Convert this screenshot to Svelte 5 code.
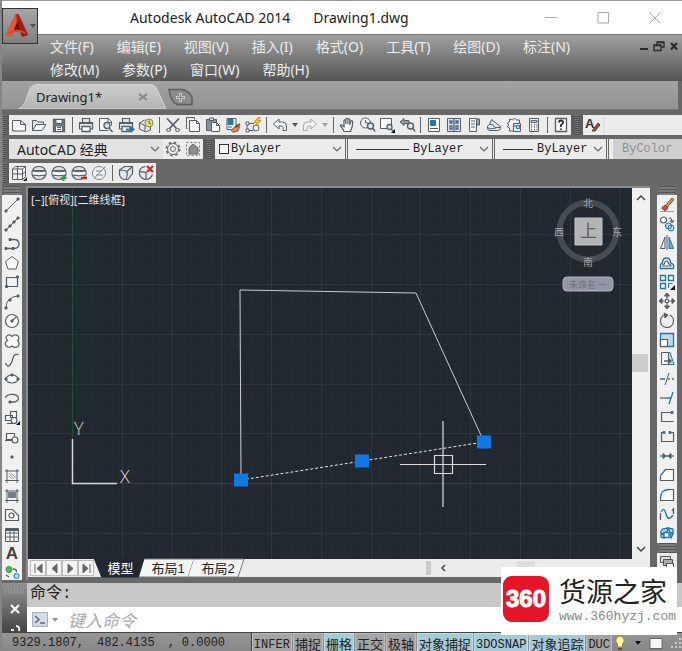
<script>
  const D = '#575d65';
  const B = '#2478a8';
  const L = '#b8dced';
  const G = '#2f9e3f';
  const R = '#cc2a2a';

  // Each icon is a list of [path, stroke, fill, stroke width] on a 20 by 20 grid.
  const globe = [['M3.500 7.500q1.500-4 6.500-4t6.500 4zM3.500 12.500q1.500 4 6.500 4t6.500-4z', D, '#dcdfe2', 1.2], ['M3 8q7 1.500 14 0v4q-7 1.500-14 0z', D, '#f7f7f7']];
  const glass = ['M10.500 11a3 3 0 1 1 6 0a3 3 0 1 1-6 0M15.700 13l2.300 3.500', D, '#d7e8f3', 1.4];
  const printer = [['M6.500 8V3.500h7V8M3.500 7.500h13v6.500h-13z', D, '#e3e6e8', 1.2], ['M6 11.500h8v5H6z', D, '#fff', 1.3], ['M4 8.500h12', D]];
  const box3 = [['M3.500 7l5-3.500h8v7l-4.500 6H8q-4-1.500-4.500-5zM3.500 7q5 0 7.500 1.500q1 4-1 8M11 8.500l5.500-5', D, '#e3e8ec', 1.2]];

  const standard = [
    { n: 'New', p: [['M3.500 5.500h8l5 4v6.500h-13zM11.500 5.500v4h5', D, '#f9f9f9']] },
    { n: 'Open', p: [['M3.500 15.500v-10h4l1.500 1.500h5.500v2.500', D, '#dfe4e7'], ['M3.500 15.500l3.500-6h10l-4 6z', D, '#f4f4f4']] },
    { n: 'Save', p: [['M4.500 4.500h11v12h-11z', D, '#747b84', 1.3], ['M7 4.500h6v4H7zM6.500 11h7v5.500h-7z', D, '#fff'], ['M8 12.500h4M8 14.500h4', D]] },
    { sep: true },
    { n: 'Plot', p: printer },
    { n: 'Plot preview', p: [['M12.500 15.500h-9v-12h9l3 3v4M12 3.500v4h4', D, '#f6f6f6'], ['M8 10.500a3 3 0 1 1 6 0a3 3 0 1 1-6 0M13 13l3.500 4', D, '#d7e8f3', 1.4]] },
    { n: 'Publish', p: [...printer, ['M10 14.500h7M14.500 12l3 2.500l-3 2.500', B, 'none', 2]] },
    { n: '3D print', p: [['M3.500 8l5-3l6 3v7l-5 2l-6-3zM3.500 8l5.500 2.500v6', D, '#e7e7e2'], ['M9 8a4 4 0 1 1 8 0a4 4 0 1 1-8 0', '#8a8a3b', '#e3dd80'], ['M13 5.500V8l2 1', D]] },
    { sep: true },
    { n: 'Cut', p: [['M4 3.500l9.500 10M16 3.500L6.500 13.500', D, 'none', 1.7], ['M3.500 15a2 1.500 0 1 1 4 0a2 1.500 0 1 1-4 0M12.500 15a2 1.500 0 1 1 4 0a2 1.500 0 1 1-4 0', D]] },
    { n: 'Copy', p: [['M4.500 13.500h-1v-11h8v2', D], ['M6.500 5.500h7l3 3v8h-10zM13.500 5.500v3h3', D, '#fafafa']] },
    { n: 'Paste', p: [['M3.500 4.500h10v11h-10z', D, '#8a9097'], ['M6.500 3h4v2.500h-4z', D, '#ddd'], ['M8.500 7.500h5l3 3v6h-8zM13.500 7.500v3h3', D, '#fff']] },
    { n: 'Match properties', p: [['M4 3.500h9v11H4z', D, '#f7f9fb'], ['M5 4.500h5v5H5z', B, B], ['M5 12h4', D], ['M8 15l4-3l5-1l-2 5l-5 1.500z', '#a45d2e', '#d18b57'], ['M12 12l5-3', '#684024', 'none', 1.5]] },
    { n: 'Block editor', p: [['M4 15.500V8.500h7M4 15.500h6', D], ['M3 14h3v3H3zM3 7h3v3H3z', D, '#fff'], ['M10 13a3 3 0 1 1 6 0a3 3 0 1 1-6 0', D, '#e7edf1'], ['M15 2.500l-4 5h3l-1 3l5-5h-3l2-3z', '#d6980f', '#ffc52c']] },
    { sep: true },
    { n: 'Undo', p: [['M3.500 9l5.500-5v3h3.500q4 0 4 4v4.500h-3.500v-3q0-1.500-2-1.500H9v3z', D, '#f4f4f4']] },
    { drop: true, n: 'Undo list' },
    { n: 'Redo', p: [['M16.500 9l-5.500-5v3H7.500q-4 0-4 4v4.500H7v-3q0-1.500 2-1.500h2v3z', '#a5a8ab', '#f4f4f4']] },
    { drop: true, n: 'Redo list', pale: true },
    { sep: true },
    { n: 'Pan', p: [['M7 16.500q-1-3-3.500-5.500q-.5-1.500 1-1.200l2.500 2V5.500q.8-1.500 1.800 0V9V4q1-1.500 2 0v5V4.500q1-1.200 2 0V10l1.200-4q1.500-.8 1.800.5q0 5-2.300 10z', D, '#fbfbfb', 1.2]] },
    { n: 'Zoom realtime', p: [['M3.500 8a5 5 0 1 1 10 0a5 5 0 1 1-10 0M8.500 5v3h3', D, '#f2f2f2'], glass] },
    { n: 'Zoom window', p: [['M3.500 3.500h11v10h-11z', D, '#fafafa'], ['M10 12a2.500 2.500 0 1 1 5 0a2.500 2.500 0 1 1-5 0M14 14l2 2', D, '#dce9ef', 1.3], ['M18 14v4h-4z', 'none', '#111']] },
    { n: 'Zoom previous', p: [['M3 7l4-3.500v2h5v3H7v2z', D, '#9199a1'], glass] },
    { sep: true },
    { n: 'Properties', p: [['M4.500 3.500h11v13h-11z', D, '#fafafa'], ['M6.500 5.500h5v5h-5z', B, B], ['M6 13.500h8', D]] },
    { n: 'DesignCenter', p: [['M3.500 3.500h13v13h-13z', D, '#dce4ee'], ['M6 6h2v2H6zM12 6h2v2h-2zM6 11h2v3H6zM12 11h2v3h-2zM10 4v12', '#4c5e8e', '#fff', 1.3]] },
    { n: 'Tool palettes', p: [['M5.500 3.500h7v13h-7z', D, '#fafafa'], ['M12.500 4h3v6h-3z', D, '#9da3a8'], ['M7 6h4M7 9h4M7 12h4', D, 'none', 1]] },
    { n: 'Sheet set', p: [['M3.500 13.500q-1-3 2-4l2-5l9 7v2q-.5 2-3 2H6q-2 0-2.500-2z', D, '#e2e6e9'], ['M6 9.500q3-1 5 3h5.500M4 13q3 1.500 8 0', D]] },
    { n: 'Markup', p: [['M3.500 12l1-2l-1-2l2-1v-3l3 1l2-2l2 2h3v3', D, '#f5f5f5'], ['M3.500 12l2 1v3h4', D], ['M9.500 8.500h7v8h-7zM9.500 11h7', D, '#e5edf3'], ['M12.500 10.500h3v3h-3z', B, L]] },
    { n: 'QuickCalc', p: [['M5.500 3.500h9v13h-9z', D, '#f5f5f5'], ['M7 5.500h6v2H7z', D, '#d6dde0'], ['M7 10h1M10 10h1M12.500 10h1M7 12h1M10 12h1M12.500 12h1M7 14.500h1M10 14.500h1M12.500 14.500h1', D, 'none', 1.3]] },
    { sep: true },
    { n: 'Help', p: [['M4.500 3.500h11v13h-11z', D, '#fafafa', 1.3], ['M8 7.500q0-2 2-2t2 2q0 1.500-2 2.500v2M10 13.500v1.500', '#26292d', 'none', 1.8]] }
  ];

  const visual = [
    { n: '2D wireframe', p: [['M3.500 6l3-2.500h10v10l-3 3h-10zM3.500 6h10v10.500M13.500 6l3-2.500M8.500 4v12.500M3.500 11h10l3-2.500', D, '#f5f5f5'], ['M18 14v4h-4z', 'none', '#111']] },
    { n: 'Hidden', p: globe },
    { n: 'Add view', p: [...globe, ['M14.500 12v6M11.500 15h6', G, 'none', 2]] },
    { n: 'Remove view', p: [...globe, ['M12 15h6', R, 'none', 2.4]] },
    { n: 'Conceptual', p: [['M3.500 10a6.500 6.500 0 1 1 13 0a6.500 6.500 0 1 1-13 0M5 15.500L16.500 3.500M7 8h6M7 12h7', '#82888e', '#f0f1f2']] },
    { sep: true },
    { n: 'View cube', p: box3 },
    { n: 'Close view', p: [['M3.500 8q1-4 6-4.500M3.500 8v3.500q2 5 6.500 5t6.500-5M10 9v7.500M3.500 8q3 1.500 6.500 1', D, '#e3e8ec', 1.2], ['M11 3l6 6M17 3l-6 6', R, 'none', 2.2]] }
  ];

  const draw = [
    { n: 'Line', p: [['M4 16L16 4', D], ['M3 15h2v2H3zM15 3h2v2h-2z', D, D]] },
    { n: 'Construction line', p: [['M4 16L16 4', D], ['M3 15h2v2H3zM15 3h2v2h-2zM7 11h2v2H7zM11 7h2v2h-2z', D, D]] },
    { n: 'Polyline', p: [['M4 14.500h8M8 5.500h4q5 0 5 4.500t-5 4.500', D, 'none', 1.3], ['M3 13.500h2v2H3zM7 4.500h2v2H7zM10 13.500h2v2h-2z', D, D]] },
    { n: 'Polygon', p: [['M10 3.500l6.500 5l-2.500 7.500H6L3.500 8.500z', D, '#f8f8f8']] },
    { n: 'Rectangle', p: [['M4.500 5.500h11v9h-11z', D, 'none', 1.2], ['M14.500 4h2v2h-2zM3.500 13.500h2v2h-2z', D, D]] },
    { n: 'Arc', p: [['M4 16Q4 5 16 4', D], ['M3 15h2v2H3zM7 7h2v2H7zM15 3h2v2h-2z', D, D]] },
    { n: 'Circle', p: [['M3.500 10a6.500 6.500 0 1 1 13 0a6.500 6.500 0 1 1-13 0M10 10l4-4', D, '#fafafa', 1.2], ['M9 9h2v2H9z', D, D]] },
    { n: 'Revision cloud', p: [['M5.500 9.500q-3-3 0-5q3-1.500 4.500 1q3-3 6-.5q2 3-.5 4.500q3 3 .5 6q-3.500 2-6-.5q-3 2.500-6 0q-2-3 1.500-5.500z', D, '#fafafa', 1.2]] },
    { n: 'Spline', p: [['M3.500 13q2 5 4.500 2t3-7t5.500-3.500', D, 'none', 1.3]] },
    { n: 'Ellipse', p: [['M4 10a6 4 0 1 1 12 0a6 4 0 1 1-12 0', D, '#fafafa', 1.2], ['M3 9h2v2H3zM15 9h2v2h-2zM9 5h2v2H9z', D, D]] },
    { n: 'Ellipse arc', p: [['M3.500 9a6.500 4 0 1 1 9 4H8', D, 'none', 1.3], ['M7 12h2v2H7z', D, D]] },
    { n: 'Insert block', p: [['M8.500 3.500h6v6h-6zM3.500 7.500h7v5h-7z', D, '#fafafa', 1.2], ['M9 12.500a3 3 0 1 1 6 0a3 3 0 1 1-6 0M5 15.500h8', D, '#f3f3f3', 1.2], ['M18 13v4h-4z', 'none', '#111']] },
    { n: 'Make block', p: [['M4.500 5.500h8v6h-8zM3 12.500h8', D, '#fafafa', 1.2], ['M10 12a3 3 0 1 1 6 0a3 3 0 1 1-6 0', D, '#fafafa', 1.2]] },
    { n: 'Point', p: [['M9 9h2v2H9z', D, D]] },
    { n: 'Hatch', p: [['M5 3v14M3 5h14M3 14.500h14M15 3v14', D], ['M7 7l5 6M9 7l5 5M7 10l3 3', '#a6abaf']] },
    { n: 'Gradient', p: [['M5 3v14M3 5h14M3 14.500h14M15 3v14', D], ['M6.500 6.500h7v5h-7z', '#777e85', '#777e85']] },
    { n: 'Region', p: [['M3.500 4.500h7l6 6v5h-13z', D, '#f7f7f7', 1.2], ['M7 10.500a2.500 2.500 0 1 1 5 0a2.500 2.500 0 1 1-5 0', D, '#fff', 1.2]] },
    { n: 'Table', p: [['M3.500 3.500h13v13h-13zM3.500 8h13M3.500 12h13M8 6v10.500M12 6v10.500', D, '#fafafa'], ['M4 4.500h12v1H4z', D, D]] },
    { n: 'Multiline text', letter: 'A' },
    { n: 'Add selected', p: [['M4 6.500a3 3 0 1 1 6 0a3 3 0 1 1-6 0', G, '#51b45e'], ['M11 6q4 0 3.500 3M4 12l3 2', D, 'none', 1.3], ['M12 13a2.500 2.500 0 1 1 5 0a2.500 2.500 0 1 1-5 0', B, L]] }
  ];

  const modify = [
    { n: 'Erase', p: [['M3 16.500h14', '#c58f57'], ['M8 11l7-8l2 1.500l-7 8z', '#76502c', '#d39b50'], ['M4.500 13l3.500-3l3 3l-3 3z', '#a43221', '#c95440']] },
    { n: 'Copy object', p: [['M3.500 6a3 3 0 1 1 6 0a3 3 0 1 1-6 0M12 4q3 0 3 4M13 6.500l2 2l2-2', D, '#fff', 1.2], ['M8.500 12a3 3 0 1 1 6 0a3 3 0 1 1-6 0M11 14a3 3 0 1 1 6 0a3 3 0 1 1-6 0', B, L]] },
    { n: 'Mirror', p: [['M8 4v11.500H3.500z', D, '#e5e8ea'], ['M12 4v11.500h4.500z', B, '#63b0db'], ['M10 2v15', D]] },
    { n: 'Offset', p: [['M3.500 15.500h13q1-5-3-5.500q0-5-4-5t-4 5q-3 1-2 5.500z', B, '#eaf5fa', 1.4], ['M6 13h8q0-2-2.500-2q0-3-2-3t-2 3q-2 0-1.500 2z', D, '#fff', 1.2]] },
    { n: 'Array', p: [['M3.500 3.500h5v5h-5zM11.500 3.500h5v5h-5zM3.500 11.500h5v5h-5z', B, '#f1f7fa', 1.3], ['M11.500 16v-4.500h4', B], ['M18 13v5h-5z', 'none', '#111']] },
    { n: 'Move', p: [['M10 3v14M3 10h14', D, 'none', 1.2], ['M10 2l2.500 3h-5zM10 18l2.500-3h-5zM2 10l3-2.500v5zM18 10l-3-2.500v5z', D, D], ['M8.500 8.500h3v3h-3z', D, '#fff']] },
    { n: 'Rotate', p: [['M8 4q-4.500 1.500-4.500 6a6.500 6.500 0 1 0 9-6', D, 'none', 1.2], ['M7 2l4 2l-3 3z', D, D]] },
    { n: 'Scale', p: [['M3.500 3.500h13v13h-13z', B, L, 1.3], ['M3.500 9.500h7v7h-7z', D, '#fff', 1.2]] },
    { n: 'Stretch', p: [['M8 3.500h5l4 12H8', B, L], ['M4.500 3.500h7v12h-7z', D, '#fafafa'], ['M7 12h6M11 9.500l3 2.500l-3 2.500', D, 'none', 1.4]] },
    { n: 'Trim', p: [['M3 10h5M11 10h2M15 10h2', B, 'none', 1.4], ['M12 4L8 16', D]] },
    { n: 'Extend', p: [['M3 10h7', D, 'none', 1.2], ['M10 10h4M16 4l-4 12', B, 'none', 1.3]] },
    { n: 'Break at point', p: [['M15 5.500H4.500v9h12', D, 'none', 1.2], ['M14 4.500h2v2h-2z', B, B]] },
    { n: 'Break', p: [['M7 5.500H4.500v9h12v-9H14', D, 'none', 1.2], ['M6 4.500h2v2H6zM12 4.500h2v2h-2z', B, B]] },
    { n: 'Join', p: [['M3 10h14', B, 'none', 1.3], ['M6 7.500l3 2.500l-3 2.500zM14 7.500l-3 2.500l3 2.500z', D, B]] },
    { n: 'Chamfer', p: [['M9 4.500h7.500v11h-13v-5', D, '#fafafa', 1.2], ['M3.500 10.500L9 4', B, 'none', 1.3]] },
    { n: 'Fillet', p: [['M12 4.500h4.500v11h-13v-3', D, '#fafafa', 1.2], ['M3.500 13q0-8.500 9-8.500', B, 'none', 1.3]] },
    { n: 'Blend curves', p: [['M3.500 16V9M16.500 10V4M15 7l2-3', D, 'none', 1.3], ['M4 8q3-6 5 2t7 1', B, 'none', 1.3]] },
    { n: 'Explode', p: [['M3.500 9l2-3l5-1v3l-5 3zM11 5l5 1v4l-3-1zM4 11l3 1v3l-3-1zM13 11h3l-2 4z', B, L, 1.3], ['M7 9.500h5v5H7z', B, '#eef8fc', 1.3]] }
  ];

  const menus = ['文件(F)', '编辑(E)', '视图(V)', '插入(I)', '格式(O)', '工具(T)', '绘图(D)', '标注(N)', '修改(M)', '参数(P)', '窗口(W)', '帮助(H)'];

  const modes = [
    { t: 'INFER', latin: true }, { t: '捕捉' }, { t: '栅格', on: true }, { t: '正交' }, { t: '极轴' },
    { t: '对象捕捉', on: true }, { t: '3DOSNAP', on: true, latin: true }, { t: '对象追踪', on: true }, { t: 'DUC', latin: true }
  ];

  const sheets = [{ t: '模型', on: true }, { t: '布局1' }, { t: '布局2' }];
  const steps = [
    ['First', 'M5 4v9M12 4v9l-5-4.500z'], ['Previous', 'M11 4v9l-5-4.500z'],
    ['Next', 'M6 4v9l5-4.500z'], ['Last', 'M12 4v9M5 4v9l5-4.500z']
  ];

  // Grid lines radiate from the drawing origin.
  const origin = { x: 44, y: 295 };
  function lines(step, skip) {
    let d = '';
    for (let i = -40; i < 200; i++) {
      if (skip && i % 5 === 0) continue;
      const x = Math.round(origin.x + i * step) + 0.5;
      const y = Math.round(origin.y + i * step) + 0.5;
      if (x > 0) d += `M${x} 0V2000`;
      if (y > 0) d += `M0 ${y}H2400`;
    }
    return d;
  }
  const major = lines(49.75, false);
  const minor = lines(9.95, true);
</script>

{#snippet icon(item)}
  {#if item.letter}
    <span class="letter">{item.letter}</span>
  {:else}
    <svg width="20" height="20" viewBox="0 0 20 20" aria-hidden="true">
      {#each item.p as [d, stroke, fill, w]}
        <path {d} stroke={stroke ?? D} fill={fill ?? 'none'} stroke-width={w ?? 1} />
      {/each}
    </svg>
  {/if}
{/snippet}

{#snippet tools(list)}
  {#each list as item}
    {#if item.sep}
      <span class="sep"></span>
    {:else if item.drop}
      <button class="drop" class:pale={item.pale} aria-label={item.n}><i class="tri"></i></button>
    {:else}
      <button class="tool" aria-label={item.n}>{@render icon(item)}</button>
    {/if}
  {/each}
{/snippet}

{#snippet chevron()}
  <svg class="chev" width="10" height="6" viewBox="0 0 10 6" aria-hidden="true"><path d="M1 1l4 4l4-4" fill="none" stroke="#666" stroke-width="1.2" /></svg>
{/snippet}

<div class="app">
  <header class="title">
    <button class="logo" aria-label="Application menu">
      <svg width="26" height="28" viewBox="0 0 26 28" aria-hidden="true">
        <path d="M2 23L11.500 2h3L24 23l-6 2l-2-6H9l-2 6z" fill="#c22e1c" />
        <path d="M11.500 2L2 23l5 2l6-14z" fill="#e4553d" />
        <path d="M14.500 2L24 23l-6 2l-5-14z" fill="#a01d12" />
        <path d="M13 10l-3 8h6z" fill="#6d130c" />
        <path d="M5 20q8-5 16 0l1 2q-9-4-18 0z" fill="#d9492f" />
      </svg>
      <i class="tri"></i>
    </button>
    <h1><span>Autodesk AutoCAD 2014</span><span>Drawing1.dwg</span></h1>
    <div class="win">
      <button aria-label="Minimize"><svg width="14" height="14" viewBox="0 0 14 14"><path d="M1 6.500h12" /></svg></button>
      <button aria-label="Maximize"><svg width="14" height="14" viewBox="0 0 14 14"><path d="M2 1.500h10.500v10.500H2z" /></svg></button>
      <button aria-label="Close"><svg width="14" height="14" viewBox="0 0 14 14"><path d="M1.500 1.500l11 11M12.500 1.500l-11 11" /></svg></button>
    </div>
  </header>

  <nav class="menu">
    <div class="items">
      {#each menus as m}<button>{m}</button>{/each}
    </div>
    <div class="mdi">
      <button aria-label="Minimize drawing"><svg width="10" height="12" viewBox="0 0 10 12"><path d="M1 9h8" stroke-width="2" /></svg></button>
      <button aria-label="Restore drawing"><svg width="12" height="12" viewBox="0 0 12 12"><path d="M4 5V2h7v5H8M1 5h7v5.500H1zM4 2.500h7M1 5.500h7" stroke-width="1.300" /></svg></button>
      <button aria-label="Close drawing"><svg width="10" height="12" viewBox="0 0 10 12"><path d="M2 3l6 6.500M8 3L2 9.500" stroke-width="2.200" /></svg></button>
    </div>
  </nav>

  <div class="files">
    <div class="file">
      <svg class="shape" viewBox="0 0 148 25" preserveAspectRatio="none" aria-hidden="true">
        <defs><linearGradient id="tabfill" x1="0" y1="0" x2="0" y2="1"><stop offset="0" stop-color="#cdcdcd" /><stop offset="1" stop-color="#b4b4b4" /></linearGradient></defs>
        <path d="M0 25C9 22 8 11 12 5Q14 0.500 19 0.500H132Q137 0.500 139 5L148 25Z" fill="url(#tabfill)" stroke="#d2d2d2" />
      </svg>
      <button class="name">Drawing1*</button>
      <button class="shut" aria-label="Close tab"><svg width="10" height="10" viewBox="0 0 10 10"><path d="M1 2l8 6M9 2L1 8" stroke="#888" stroke-width="2" /></svg></button>
    </div>
    <button class="plus" aria-label="New tab">
      <svg width="26" height="18" viewBox="0 0 26 18"><path d="M1 1.500h13q7 1 10 8v7H9q-6-2-8-15z" fill="#8b8b8b" stroke="#5c5c5c" stroke-width="1.500" /><path d="M12.500 5v9M8 9.500h9" stroke="#c8c8c8" stroke-width="3" /><path d="M12.500 6v7M9 9.500h7" stroke="#888" /></svg>
    </button>
  </div>

  <div class="bars">
    <div class="row">
      <i class="grip"></i>
      <div class="bar">{@render tools(standard)}</div>
      <i class="grip mid"></i>
      <div class="bar rest">
        <button class="tool" aria-label="Text style">
          <svg width="20" height="20" viewBox="0 0 20 20"><text x="2" y="13" font-family="Liberation Sans" font-weight="bold" font-size="13" fill="#333">A</text><path d="M9 16l6-8l2 2l-5 6z" fill="#9b5a32" stroke="#5a3520" /></svg>
        </button>
        <span class="line"></span>
      </div>
    </div>

    <div class="row">
      <i class="grip"></i>
      <div class="bar">
        <div class="pick space">
          <select aria-label="Workspace"><option>AutoCAD 经典</option></select>
          {@render chevron()}
        </div>
        <button class="tool" aria-label="Workspace settings">
          <svg width="18" height="18" viewBox="0 0 18 18" fill="none" stroke="#6a6e73"><circle cx="9" cy="9" r="6.500" stroke-width="2" stroke-dasharray="2.500 2.600" /><circle cx="9" cy="9" r="5.500" fill="#eee" /><circle cx="9" cy="9" r="2.500" /></svg>
        </button>
        <button class="tool" aria-label="My workspace">
          <svg width="18" height="18" viewBox="0 0 18 18"><path d="M2.500 2.500h13v13h-13z" fill="none" stroke="#777" stroke-dasharray="2 2" /><path d="M5 14V8l4-4l5 4v6z" fill="#8a8f94" stroke="#666" /></svg>
        </button>
      </div>
      <i class="grip mid"></i>
      <div class="pick layer">
        <i class="swatch"></i>
        <select aria-label="Color"><option>ByLayer</option></select>
        {@render chevron()}
      </div>
      <i class="split"></i>
      <div class="pick type">
        <i class="rule"></i>
        <select aria-label="Linetype"><option>ByLayer</option></select>
        {@render chevron()}
      </div>
      <i class="split"></i>
      <div class="pick weight">
        <i class="rule"></i>
        <select aria-label="Lineweight"><option>ByLayer</option></select>
        {@render chevron()}
      </div>
      <i class="split"></i>
      <div class="pick plot"><select aria-label="Plot style" disabled><option>ByColor</option></select></div>
    </div>

    <div class="row">
      <i class="grip"></i>
      <div class="bar">{@render tools(visual)}</div>
    </div>
  </div>

  <main>
    <aside class="side">
      <i class="hgrip"></i>
      <div class="stack drawing">
        {#each draw as item}<button aria-label={item.n}>{@render icon(item)}</button>{/each}
      </div>
    </aside>

    <section class="view">
      <div class="plane">
        <div class="canvas">
          <svg class="model" width="100%" height="100%" role="img" aria-label="Drawing">
            <path d={minor} stroke="#252c35" fill="none" />
            <path d={major} stroke="#2f3841" fill="none" />
            <path d="M44.500 0V251" stroke="#214b35" />
            <path d="M89 295.500H2400" stroke="#59303a" />
            <path d="M44.500 251V295.500H89" stroke="#d9d3d8" fill="none" stroke-width="1.500" />
            <text x="46" y="247" class="axis">Y</text>
            <text x="92" y="295" class="axis">X</text>
            <path d="M213 292L212 102L388 105L456 254" stroke="#c9ccd0" fill="none" />
            <path d="M213 292L456 254" stroke="#e6e6e6" stroke-dasharray="3 2" />
            <path d="M206 285.500h14v13h-14zM327 266.500h14v13h-14zM449 247.500h14v13h-14z" fill="#0f7ae5" />
            <path d="M372 276.500H458M415 233V319" stroke="#dcdcdf" stroke-width="1.200" />
            <path d="M406.500 267.500h18v18h-18z" stroke="#dcdcdf" fill="none" stroke-width="1.200" />
          </svg>
          <div class="label">[−][俯视][二维线框]</div>
          <div class="compass">
            <svg width="72" height="100" viewBox="0 0 72 100" role="img" aria-label="ViewCube">
              <circle cx="36" cy="37" r="28.500" fill="none" stroke="#464c55" stroke-width="6" />
              <path d="M23 24h27v27H23z" fill="#b4b4b6" stroke="#c5c5c7" />
              <g class="cjk" text-anchor="middle">
                <text x="36" y="13">北</text><text x="36" y="72">南</text><text x="7" y="42">西</text><text x="65" y="42">东</text>
                <text x="36.500" y="43" class="top">上</text>
              </g>
              <rect x="11" y="83" width="50" height="14" rx="4" fill="#9497a5" stroke="#b2b4c0" />
              <text x="36" y="94" text-anchor="middle" class="ucs">未命名 一</text>
            </svg>
          </div>
        </div>
        <div class="vscroll">
          <button aria-label="Scroll up"><svg width="12" height="8" viewBox="0 0 12 8"><path d="M2 6l4-4l4 4" /></svg></button>
          <i class="thumb"></i>
          <button aria-label="Scroll down"><svg width="12" height="8" viewBox="0 0 12 8"><path d="M2 2l4 4l4-4" /></svg></button>
        </div>
      </div>
      <div class="sheets">
        <div class="steps">
          {#each steps as [n, d]}
            <button aria-label={n}><svg width="16" height="17" viewBox="0 0 16 17"><path {d} fill="#666" stroke="#666" /></svg></button>
          {/each}
        </div>
        {#each sheets as s}
          <button class="sheet" class:on={s.on}>
            <svg viewBox="0 0 50 18" preserveAspectRatio="none" aria-hidden="true">
              <path d={s.on ? 'M-4 0H51L45 18H4Z' : 'M1 0H51L45 18H-5'} />
            </svg>
            <span>{s.t}</span>
          </button>
        {/each}
        <div class="hscroll"><i class="hsplit"></i><button aria-label="Scroll left"><svg width="8" height="12" viewBox="0 0 8 12"><path d="M6 3L3 6l3 3" /></svg></button><i class="hthumb"></i></div>
      </div>
    </section>

    <aside class="side right">
      <i class="hgrip"></i>
      <div class="stack modifying">
        {#each modify as item}<button aria-label={item.n}>{@render icon(item)}</button>{/each}
      </div>
      <i class="hgrip tall"></i>
      <div class="order">
        <button aria-label="Draw order"><svg width="20" height="20" viewBox="0 0 20 20"><path d="M3.500 3.500h10v6h-10z" fill="#ddd" stroke="#555" /><path d="M6.500 6.500h9v6h-9z" fill="#aaa" stroke="#555" /><path d="M9.500 10.500h7v5h-7z" fill="#fff" stroke="#555" /></svg></button>
      </div>
    </aside>
  </main>

  <section class="command">
    <div class="handle">
      <i class="dots"></i>
      <button aria-label="Close command line"><svg width="12" height="12" viewBox="0 0 12 12"><path d="M2 2l8 8M10 2l-8 8" stroke="#fff" stroke-width="2.200" /></svg></button>
      <svg width="14" height="8" viewBox="0 0 14 8" aria-hidden="true"><path d="M3 6h3M8 2q4 0 3 5" fill="none" stroke="#eee" stroke-width="2" /></svg>
    </div>
    <div class="lines">
      <label class="history" for="cmd">命令:</label>
      <div class="entry">
        <button class="recent" aria-label="Recent commands">
          <svg width="16" height="15" viewBox="0 0 16 15"><path d="M.5.500h15v14H.5z" fill="#d5dce8" stroke="#a5adbb" /><path d="M3 4l4 3.500L3 11M8 11h5" fill="none" stroke="#5c687d" stroke-width="1.500" /></svg>
          <i class="tri"></i>
        </button>
        <input id="cmd" type="text" placeholder="键入命令" />
      </div>
    </div>
  </section>

  <footer class="status">
    <output class="coords"><span>9329.1807,</span><span>482.4135</span><span>,</span><span>0.0000</span></output>
    {#each modes as m}
      <button class="mode" class:on={m.on} class:latin={m.latin} aria-pressed={!!m.on}>{m.t}</button>
    {/each}
    <div class="tray">
      <button aria-label="Tips"><svg width="14" height="18" viewBox="3 0 14 18"><path d="M10 2a4.500 4.500 0 0 1 2.500 8v3h-5v-3A4.500 4.500 0 0 1 10 2z" fill="#fff3a1" stroke="#9b8438" /><path d="M8 15h4" stroke="#555" stroke-width="2" /></svg></button>
      <button class="drop" aria-label="Status bar menu"><i class="tri"></i></button>
      <button aria-label="Clean screen"><svg width="16" height="14" viewBox="0 0 16 14"><path d="M2 2.500h12v10H2z" fill="#f7f7f7" stroke="#666" /></svg></button>
      <svg class="size" width="12" height="12" viewBox="0 0 12 12" aria-hidden="true"><path d="M9 1h2v2H9zM5 5h2v2H5zM9 5h2v2H9zM1 9h2v2H1zM5 9h2v2H5zM9 9h2v2H9z" fill="#ccc" /></svg>
    </div>
  </footer>

  <div class="brand">
    <div class="badge">360</div>
    <div class="who"><strong>货源之家</strong><span>www.360hyzj.com</span></div>
  </div>
</div>

<style>
  :global(body) { margin: 0; }
  * { box-sizing: border-box; }
  .app {
    position: relative; display: flex; flex-direction: column; min-height: 100vh; overflow: hidden;
    background: #686868; border-left: 2px solid #858585;
    font-family: "Noto Sans", "Noto Sans CJK SC", sans-serif; font-size: 14px; color: #222;
  }
  button { display: flex; align-items: center; justify-content: center; padding: 0; border: 0; background: none; font: inherit; color: inherit; flex: none; }
  svg { display: block; flex: none; }
  i { display: block; flex: none; }
  .tri { border: 3px solid transparent; border-top: 4px solid #555; border-bottom: 0; }

  .title { position: relative; display: flex; align-items: center; height: 35px; background: #fff; border-top: 1px solid #999; border-bottom: 1px solid #777; padding: 0 20px 0 128px; }
  .logo { position: absolute; left: 0; top: 7px; z-index: 2; width: 36px; height: 36px; border: 1px solid #333; background: linear-gradient(#a7a7a7, #808080); justify-content: flex-start; padding-left: 1px; }
  h1 { display: flex; gap: 23px; margin: 0; font-size: 14px; line-height: 20px; font-weight: 400; flex: 1; white-space: nowrap; }
  .win { display: flex; gap: 38px; }
  .win path { fill: none; stroke: #aaa; }

  .menu { display: flex; justify-content: space-between; align-items: flex-start; gap: 24px; background: linear-gradient(#a0a0a0, #555); padding: 0 3px 0 48px; min-height: 45px; }
  .items { display: flex; flex-wrap: wrap; column-gap: 23px; flex: 1; }
  .items button { color: #ececec; font-size: 14px; line-height: 22px; height: 23px; }
  .mdi { display: flex; gap: 4px; padding-top: 5px; }
  .mdi path { fill: none; stroke: #2a2a2a; }

  .files { display: flex; align-items: flex-end; height: 29px; margin-right: 4px; padding: 0 0 0 16px; background: linear-gradient(#a2a2a2, #939393); border-bottom: 1px solid #777; }
  .file { position: relative; display: flex; align-items: center; width: 148px; height: 25px; padding: 0 18px; justify-content: space-between; }
  .shape { position: absolute; left: 0; top: 0; width: 100%; height: 100%; }
  .name, .shut { position: relative; }
  .name { font-size: 13px; }
  .plus { margin: 0 0 3px 2px; }

  .bars { display: flex; flex-direction: column; gap: 4px; padding: 5px 0 3px; }
  .row { display: flex; height: 20px; }
  .grip { width: 7px; background: repeating-linear-gradient(#777 0 1px, #4c4c4c 1px 2px); border-left: 1px solid #777; border-right: 2px solid #5c5c5c; }
  .grip.mid { width: 12px; border-left: 4px solid #5c5c5c; border-right: 4px solid #5c5c5c; }
  .bar { display: flex; align-items: center; background: #ececec; }
  .rest { flex: 1; }
  .tool { width: 20px; height: 20px; }
  .sep { width: 7px; height: 16px; background: linear-gradient(90deg, transparent 3px, #666 3px 4px, transparent 4px); }
  .line { width: 1px; height: 20px; background: #ddd; }
  .drop { width: 10px; height: 20px; }
  .pale { opacity: .5; }

  .pick { position: relative; display: flex; align-items: center; background: #ececec; height: 20px; min-width: 0; }
  .pick select { appearance: none; border: 0; background: none; padding: 0; margin: 0; font-family: "Liberation Mono", monospace; font-size: 12px; color: #222; flex: 1; min-width: 0; height: 20px; }
  .chev { position: absolute; right: 3px; top: 7px; pointer-events: none; }
  .pick.space { width: 154px; padding-left: 8px; background: #e2e2e2; }
  .pick.space select { font-family: "Noto Sans", "Noto Sans CJK SC", sans-serif; font-size: 14px; }
  .layer { width: 130px; padding-left: 4px; gap: 2px; }
  .swatch { width: 10px; height: 10px; border: 1px solid #333; background: #fff; }
  .split { width: 7px; background: linear-gradient(90deg, #666 1px, #ececec 1px 2px, #666 2px 3px, #ececec 3px); }
  .type { width: 140px; padding-left: 4px; gap: 4px; }
  .rule { width: 53px; height: 1px; background: #333; }
  .weight { width: 107px; padding-left: 4px; gap: 4px; }
  .weight .rule { width: 30px; }
  .plot { flex: 1; padding-left: 9px; background: #cfcfcf; }
  .plot select { color: #8e8e8e; opacity: 1; }

  main { display: flex; flex: 1; min-height: 394px; }
  .side { display: flex; flex-direction: column; width: 20px; overflow: hidden; max-height: 394px; }
  .hgrip { height: 9px; margin: 0 2px; background: repeating-linear-gradient(#555 0 1px, #7c7c7c 1px 3px); }
  .hgrip.tall { height: 10px; }
  .stack { display: flex; flex-direction: column; background: #f0f0f0; width: 20px; }
  .stack button { flex: 1 1 0; min-height: 0; width: 20px; }
  .drawing { height: 388px; flex: none; }
  .modifying { height: 348px; flex: none; }
  .letter { font-family: "Liberation Sans", sans-serif; font-size: 17px; line-height: 18px; font-weight: 700; color: #444; }
  .right { margin: 0 5px 0 7px; }
  .order { background: #ececec; flex: 1; }

  .view { flex: 1; min-width: 0; display: flex; flex-direction: column; margin-left: 4px; border-left: 2px solid #8a8a8a; border-top: 2px solid #8a8a8a; padding-bottom: 3px; }
  .plane { display: flex; flex: 1; }
  .canvas { position: relative; flex: 1; min-width: 0; background: #212830; overflow: hidden; }
  .model { position: absolute; left: 0; top: 0; }
  .axis { font-family: "Open Sans", sans-serif; font-weight: 300; font-size: 18px; fill: #d2d2d4; }
  .label { position: absolute; left: 3px; top: 4px; font-size: 11px; line-height: 16px; color: #e4e4e4; }
  .compass { position: absolute; right: 8px; top: 6px; }
  .cjk { font-family: "Noto Sans CJK SC", sans-serif; font-size: 10px; fill: #a4a6ab; }
  .top { font-size: 17px; fill: #5c5c62; }
  .ucs { font-family: "Noto Sans CJK SC", sans-serif; font-size: 9px; fill: #70737f; }
  .vscroll { display: flex; flex-direction: column; align-items: center; justify-content: space-between; width: 18px; padding: 6px 0; background: #f0f0f0; }
  .vscroll path, .hscroll path { fill: none; stroke: #444; stroke-width: 1.5; }
  .thumb { width: 16px; height: 18px; margin-bottom: 22px; background: #ccc; }
  .vscroll .thumb { align-self: flex-start; }

  .sheets { display: flex; height: 18px; background: #ececec; }
  .steps { display: flex; padding: 1px 4px 0 2px; }
  .steps button { border: 1px solid #bbb; background: #f4f4f4; width: 16px; height: 16px; }
  .sheet { position: relative; width: 50px; font-size: 13px; line-height: 17px; font-family: "Liberation Sans", "Noto Sans CJK SC", sans-serif; }
  .sheet svg { position: absolute; inset: 0; width: 100%; height: 100%; overflow: visible; }
  .sheet path { fill: #f5f5f5; stroke: #777; }
  .sheet.on path { fill: #212830; stroke: #212830; }
  .sheet.on { width: 45px; color: #fff; z-index: 1; }
  .sheet span { position: relative; }
  .hscroll { display: flex; align-items: center; flex: 1; justify-content: flex-end; padding-right: 115px; }
  .hsplit { width: 5px; height: 14px; background: #ccc; margin-right: 8px; }
  .hthumb { width: 18px; height: 14px; background: #ddd; margin-left: 70px; }

  .command { display: flex; height: 53px; padding-top: 3px; border-bottom: 1px solid #444; background: #686868; }
  .handle { display: flex; flex-direction: column; align-items: center; justify-content: space-between; width: 25px; padding-top: 4px; background: linear-gradient(#929292, #454545); }
  .dots { width: 20px; height: 7px; background: repeating-linear-gradient(90deg, #999 0 1px, transparent 1px 3px); }
  .lines { flex: 1; display: flex; flex-direction: column; min-width: 0; }
  .history { height: 24px; padding-left: 3px; background: #c8c8c8; font-family: "Liberation Mono", "Noto Sans CJK SC", monospace; font-size: 16px; line-height: 23px; }
  .entry { display: flex; align-items: center; flex: 1; background: #fff; padding-left: 5px; gap: 10px; }
  .recent { gap: 4px; }
  .recent .tri { border-top-color: #999; }
  input { width: 400px; min-width: 0; border: 0; outline: 0; padding: 0; background: none; font: italic 17px "Noto Sans CJK SC", sans-serif; height: 24px; }
  input::placeholder { color: #aaa; opacity: 1; }

  .status { display: flex; height: 20px; background: linear-gradient(#959595, #858585); overflow: hidden; }
  .coords { display: flex; flex: 1; border-right: 1px solid #444; white-space: pre; padding-left: 10px; font: 12px/20px "Liberation Mono", monospace; }
  .coords span:nth-child(2) { margin-left: 13px; }
  .coords span:nth-child(3) { margin-left: 13px; }
  .coords span:nth-child(4) { margin-left: 7px; }
  .mode { padding: 0 1px; margin-right: 1px; height: 20px; background: #a4a4a4; border: 1px solid #bdbdbd; border-bottom: 0; font: 13px/18px "Noto Sans CJK SC", sans-serif; white-space: nowrap; }
  .mode.latin { font: 12px/18px "Liberation Mono", monospace; padding-top: 2px; }
  .mode.on { background: #a3cbd8; border-color: #bfe0ea; }
  .tray { display: flex; align-items: center; justify-content: space-between; width: 69px; }
  .tray .tri { border-top-color: #111; }

  .brand { position: absolute; right: 5px; bottom: 18px; z-index: 3; display: flex; align-items: center; gap: 10px; padding: 0 0 4px 2px; background: #fff; width: 176px; height: 68px; }
  .badge { display: flex; align-items: center; justify-content: center; width: 46px; height: 46px; border-radius: 9px; background: #e8142a; color: #fff; font: 700 24px/46px "Liberation Sans", sans-serif; -webkit-text-stroke: 1px #fff; }
  .who { display: flex; flex-direction: column; white-space: nowrap; }
  .who strong { font: 400 27px/36px "Noto Sans CJK SC", sans-serif; color: #222; }
  .who span { font: 13px/16px "Liberation Mono", monospace; color: #888; }
</style>
